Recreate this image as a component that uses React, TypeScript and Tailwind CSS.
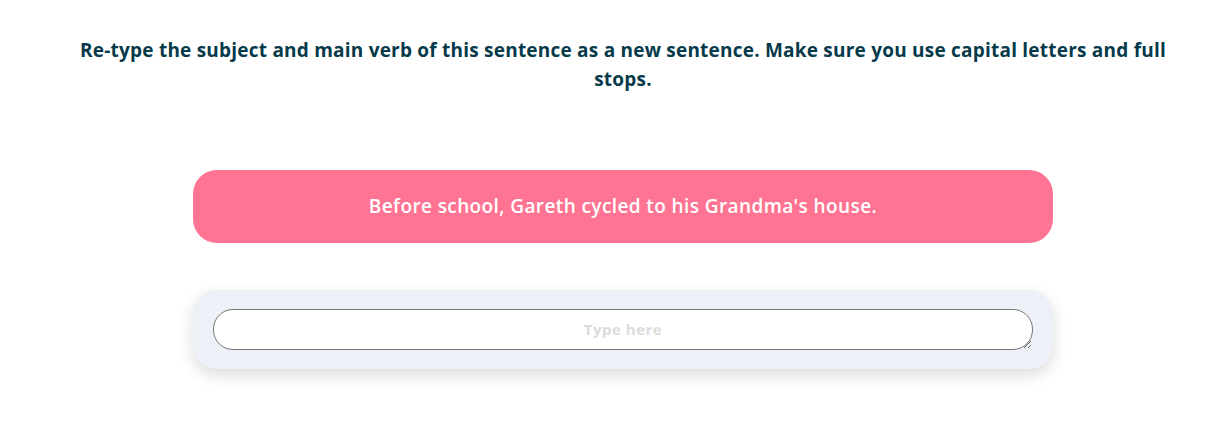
import React from "react";

const App = () => {
  return (
    <div
      className="min-h-screen w-full bg-white pl-[40px] pr-[14px]"
      style={{ fontFamily: '"Open Sans", "Noto Sans", sans-serif' }}
    >
      <h1 className="mx-auto max-w-[1110px] pt-[36px] text-center text-[19px] font-bold leading-[29px] tracking-[0.22px] text-[#063a4b]">
        Re-type the subject and main verb of this sentence as a new sentence.
        Make sure you use capital letters and full stops.
      </h1>

      <div className="mx-auto mt-[76px] flex h-[73px] w-[860px] items-center justify-center rounded-[24px] bg-[#ff7493] text-[19px] font-semibold tracking-[0.4px] text-white">
        Before school, Gareth cycled to his Grandma's house.
      </div>

      <div className="mx-auto mt-[47px] w-[860px] rounded-[24px] bg-[#eef0f7] px-[20px] py-[19px] shadow-[0_6px_16px_rgba(0,0,0,0.14)]">
        <textarea
          placeholder="Type here"
          className="block h-[41px] w-full rounded-[20px] border border-[#767676] bg-white px-4 py-[9px] text-center text-[15px] font-bold leading-[21px] tracking-[0.5px] text-[#333] outline-none placeholder:text-[#dcdcdc]"
        />
      </div>
    </div>
  );
};

export default App;
